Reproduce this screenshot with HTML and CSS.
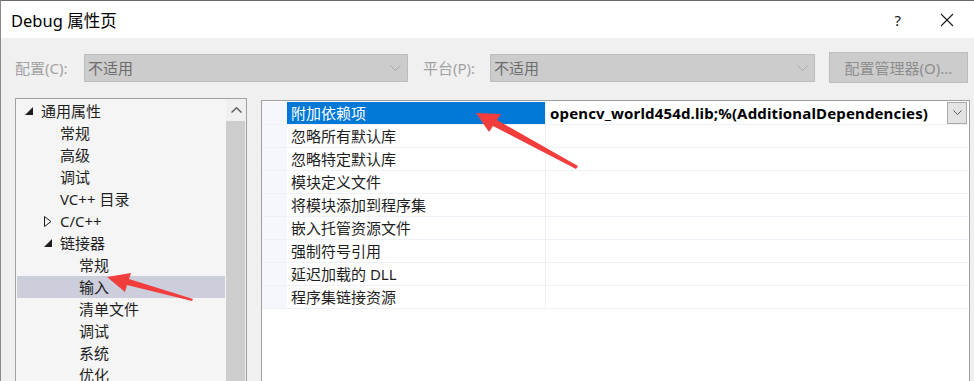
FILE: index.html
```html
<!DOCTYPE html>
<html lang="zh-CN">
<head>
  <meta charset="UTF-8">
  <title>Debug 属性页</title>
  <link rel="stylesheet" href="styles.css">
</head>
<body>
  <div class="window">
    <div class="titlebar">
      <span class="title">Debug 属性页</span>
      <span class="help">?</span>
      <svg class="close" width="14" height="14" viewBox="0 0 14 14">
        <path d="M1 1 L13 13 M13 1 L1 13" stroke="#1a1a1a" stroke-width="1.1" fill="none"/>
      </svg>
    </div>

    <div class="content">
      <div class="toolbar">
        <span class="label label-config">配置(C):</span>
        <div class="combo combo-config">
          <span>不适用</span>
          <svg width="11" height="6" viewBox="0 0 11 6"><path d="M0.5 0.5 L5.5 5.5 L10.5 0.5" stroke="#a8a8a8" fill="none"/></svg>
        </div>
        <span class="label label-platform">平台(P):</span>
        <div class="combo combo-platform">
          <span>不适用</span>
          <svg width="11" height="6" viewBox="0 0 11 6"><path d="M0.5 0.5 L5.5 5.5 L10.5 0.5" stroke="#a8a8a8" fill="none"/></svg>
        </div>
        <div class="btn-manager">配置管理器(O)...</div>
      </div>

      <div class="main">
        <div class="tree">
          <div class="tree-list">
            <div class="node lvl0"><span class="tw"><svg width="9" height="9" viewBox="0 0 9 9"><polygon points="8,0 8,8 0,8" fill="#1e1e1e"/></svg></span>通用属性</div>
            <div class="node lvl1"><span class="tw"></span>常规</div>
            <div class="node lvl1"><span class="tw"></span>高级</div>
            <div class="node lvl1"><span class="tw"></span>调试</div>
            <div class="node lvl1"><span class="tw"></span>VC++ 目录</div>
            <div class="node lvl0 sub"><span class="tw"><svg width="8" height="11" viewBox="0 0 8 11"><polygon points="0.5,0.5 7,5.5 0.5,10.5" fill="none" stroke="#1e1e1e"/></svg></span>C/C++</div>
            <div class="node lvl0 sub"><span class="tw"><svg width="9" height="9" viewBox="0 0 9 9"><polygon points="8,0 8,8 0,8" fill="#1e1e1e"/></svg></span>链接器</div>
            <div class="node lvl2"><span class="tw"></span>常规</div>
            <div class="node lvl2 selected"><span class="tw"></span>输入</div>
            <div class="node lvl2"><span class="tw"></span>清单文件</div>
            <div class="node lvl2"><span class="tw"></span>调试</div>
            <div class="node lvl2"><span class="tw"></span>系统</div>
            <div class="node lvl2"><span class="tw"></span>优化</div>
          </div>
          <div class="scrollbar">
            <div class="scroll-up">
              <svg width="11" height="6" viewBox="0 0 11 6"><path d="M0.5 5.5 L5.5 0.8 L10.5 5.5" stroke="#606060" stroke-width="1.5" fill="none"/></svg>
            </div>
            <div class="scroll-thumb"></div>
          </div>
        </div>

        <div class="grid">
          <div class="row selected">
            <div class="gutter"></div>
            <div class="name">附加依赖项</div>
            <div class="value">
              <span class="value-text">opencv_world454d.lib;%(AdditionalDependencies)</span>
              <span class="drop"><svg width="9" height="5" viewBox="0 0 9 5"><path d="M0.5 0.5 L4.5 4.5 L8.5 0.5" stroke="#555" fill="none"/></svg></span>
            </div>
          </div>
          <div class="row"><div class="gutter"></div><div class="name">忽略所有默认库</div><div class="value"></div></div>
          <div class="row"><div class="gutter"></div><div class="name">忽略特定默认库</div><div class="value"></div></div>
          <div class="row"><div class="gutter"></div><div class="name">模块定义文件</div><div class="value"></div></div>
          <div class="row"><div class="gutter"></div><div class="name">将模块添加到程序集</div><div class="value"></div></div>
          <div class="row"><div class="gutter"></div><div class="name">嵌入托管资源文件</div><div class="value"></div></div>
          <div class="row"><div class="gutter"></div><div class="name">强制符号引用</div><div class="value"></div></div>
          <div class="row"><div class="gutter"></div><div class="name">延迟加载的 DLL</div><div class="value"></div></div>
          <div class="row"><div class="gutter"></div><div class="name">程序集链接资源</div><div class="value"></div></div>
        </div>
      </div>
    </div>
  </div>

  <!-- annotation arrows drawn over the dialog -->
  <svg class="arrows" width="974" height="381" viewBox="0 0 974 381">
    <polygon points="476,113 501,114 497,120 578,166 576,169 493,126 489,132" fill="#f23d3d"/>
    <polygon points="107,277 131,273 129,279 193,299 192,301 127,285 125,292" fill="#f23d3d"/>
  </svg>
</body>
</html>
```

FILE: styles.css
```css
body {
  margin: 0;
  width: 974px;
  height: 381px;
  overflow: hidden;
  position: relative;
  font-family: "Noto Sans", "Noto Sans CJK SC", sans-serif;
  color: #1e1e1e;
  background-color: #f0f0f0;
}

.window {
  height: 381px;
  border-top: 1px solid #6a6a6a;
  border-left: 1px solid #8a8a8a;
  box-sizing: border-box;
  background-color: #f0f0f0;
}

.titlebar {
  height: 37px;
  background-color: #ffffff;
  display: flex;
  align-items: center;
  padding-left: 10px;
}
.title {
  font-size: 16.5px;
  color: #000000;
  flex: 1;
}
.help {
  font-size: 15px;
  color: #1a1a1a;
  margin-right: 39px;
}
.close {
  margin-right: 20px;
}

.content {
  padding-left: 14px;
}

.toolbar {
  display: flex;
  align-items: center;
  height: 31px;
  margin-top: 14px;
}
.label {
  font-size: 15px;
  color: #a2a2a2;
}
.label-config {
  width: 69px;
}
.label-platform {
  width: 67px;
  margin-left: 15px;
}
.combo {
  height: 28px;
  box-sizing: border-box;
  background-color: #cccccc;
  border: 1px solid #bcbcbc;
  display: flex;
  align-items: center;
  justify-content: space-between;
  padding: 0 6px 0 3px;
  font-size: 15px;
  color: #6d6d6d;
}
.combo-config {
  width: 324px;
}
.combo-platform {
  width: 325px;
}
.btn-manager {
  margin-left: 14px;
  width: 139px;
  height: 31px;
  box-sizing: border-box;
  background-color: #cccccc;
  border: 1px solid #bcbcbc;
  font-size: 15px;
  color: #8e8e8e;
  display: flex;
  align-items: center;
  justify-content: center;
}

.main {
  display: flex;
  align-items: flex-start;
  margin-top: 15px;
  height: 300px;
}

.tree {
  width: 232px;
  height: 300px;
  box-sizing: border-box;
  border: 1px solid #a0a0a0;
  background-color: #f5f5f5;
  display: flex;
}
.tree-list {
  width: 208px;
  padding: 1px;
}
.node {
  height: 22px;
  display: flex;
  align-items: center;
  font-size: 15px;
  line-height: 22px;
  white-space: nowrap;
}
.tw {
  width: 16px;
  display: flex;
  align-items: center;
}
.lvl0 { padding-left: 8px; }
.lvl0.sub { padding-left: 27px; }
.lvl1 { padding-left: 27px; }
.lvl2 { padding-left: 46px; }
.node.selected {
  background-color: #cccedb;
}

.scrollbar {
  width: 20px;
  display: flex;
  flex-direction: column;
  background-color: #f0f0f0;
}
.scroll-up {
  height: 22px;
  display: flex;
  align-items: center;
  justify-content: center;
}
.scroll-thumb {
  flex: 1;
  margin-right: 1px;
  background-color: #cdcdcd;
}

.grid {
  width: 709px;
  height: 300px;
  margin-left: 14px;
  margin-top: 2px;
  box-sizing: border-box;
  border: 1px solid #a0a0a0;
  background-color: #ffffff;
  padding-top: 1px;
}
.row {
  display: flex;
  height: 23px;
  box-sizing: border-box;
  border-bottom: 1px solid #eef1f7;
  font-size: 15px;
  line-height: 22px;
}
.gutter {
  width: 25px;
  background-color: #f5f7fc;
}
.name {
  width: 259px;
  box-sizing: border-box;
  padding-left: 4px;
  border-right: 1px solid #eef1f7;
  white-space: nowrap;
}
.value {
  flex: 1;
  display: flex;
  align-items: center;
  padding-left: 4px;
  padding-right: 2px;
}
.value-text {
  flex: 1;
  font-weight: bold;
  font-size: 15px;
  letter-spacing: 0.15px;
  color: #000000;
  white-space: nowrap;
}
.drop {
  width: 20px;
  height: 22px;
  box-sizing: border-box;
  margin-top: -1px;
  background-color: #e3e3e3;
  border: 1px solid #a8a8a8;
  display: flex;
  align-items: center;
  justify-content: center;
}
.row.selected .name {
  background-color: #0078d7;
  color: #ffffff;
}

.arrows {
  position: absolute;
  top: 0;
  left: 0;
  pointer-events: none;
}
```
